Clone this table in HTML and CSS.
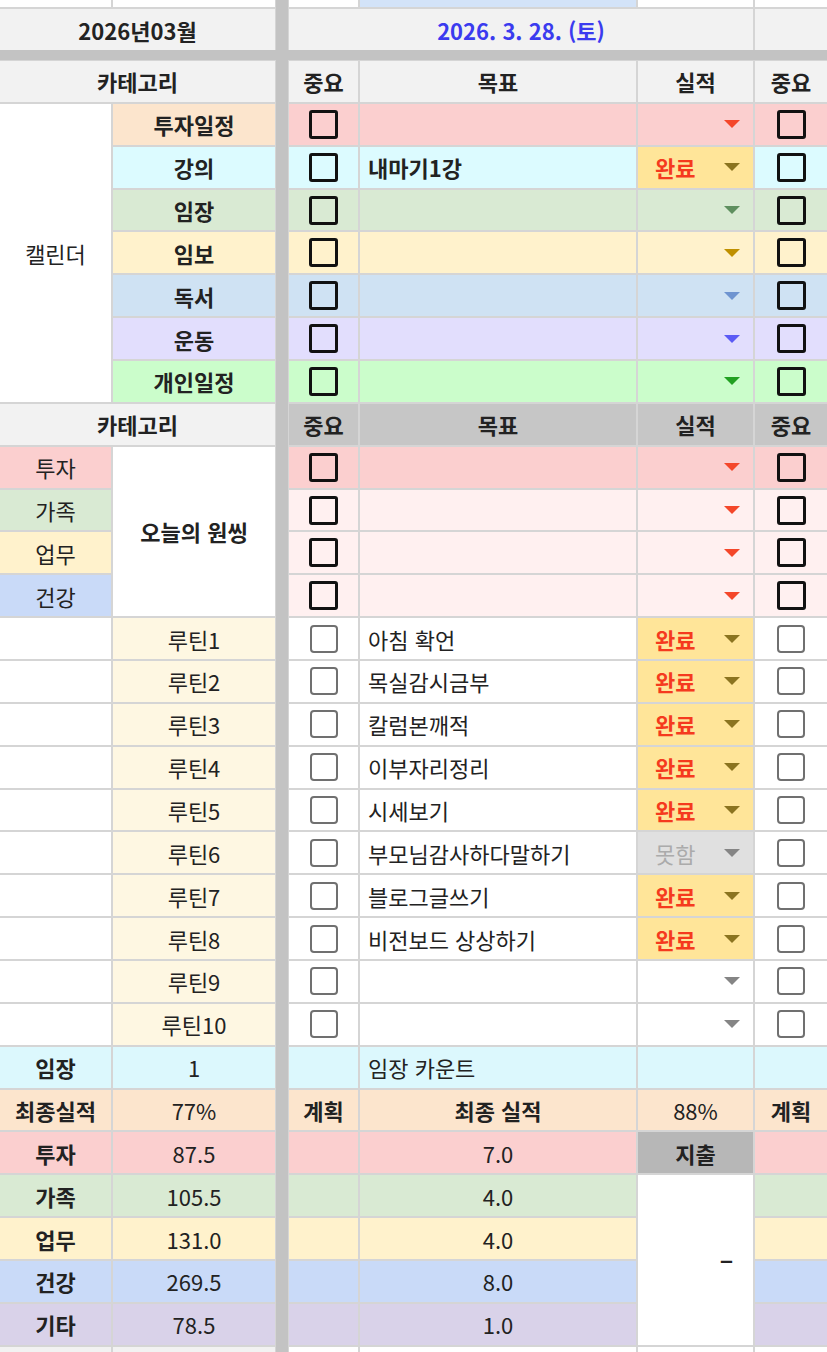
FILE: index.html
```html
<!DOCTYPE html>
<html lang="ko">
<head>
<meta charset="utf-8">
<title>2026년03월</title>
<link rel="stylesheet" href="styles.css">
</head>
<body>
<div class="sheet">
  <div class="divider"></div>
  <div class="hbar"></div>

  <!-- top partial row -->
  <div class="c"></div>
  <div class="c"></div>
  <div class="c"></div>
  <div class="c bg-sel"></div>
  <div class="c"></div>
  <div class="c"></div>

  <!-- date row -->
  <div class="c s2 bg-hdr b">2026년03월</div>
  <div class="c s3 bg-hdr b date">2026. 3. 28. (토)</div>
  <div class="c bg-hdr"></div>

  <!-- header -->
  <div class="c s2 bg-hdr b">카테고리</div>
  <div class="c bg-hdr b">중요</div>
  <div class="c bg-hdr b">목표</div>
  <div class="c bg-hdr b">실적</div>
  <div class="c bg-hdr b">중요</div>

  <!-- calendar section -->
  <div class="c r7">캘린더</div>

  <div class="c bg-peach b">투자일정</div>
  <div class="c bg-pink"><span class="cb"></span></div>
  <div class="c bg-pink t"></div>
  <div class="c bg-pink dd"><span class="arr a-red"></span></div>
  <div class="c bg-pink"><span class="cb"></span></div>

  <div class="c bg-cyan b">강의</div>
  <div class="c bg-cyan"><span class="cb"></span></div>
  <div class="c bg-cyan t b">내마기1강</div>
  <div class="c bg-chip dd"><span class="lbl">완료</span><span class="arr a-olive"></span></div>
  <div class="c bg-cyan"><span class="cb"></span></div>

  <div class="c bg-green b">임장</div>
  <div class="c bg-green"><span class="cb"></span></div>
  <div class="c bg-green t"></div>
  <div class="c bg-green dd"><span class="arr a-green"></span></div>
  <div class="c bg-green"><span class="cb"></span></div>

  <div class="c bg-yellow b">임보</div>
  <div class="c bg-yellow"><span class="cb"></span></div>
  <div class="c bg-yellow t"></div>
  <div class="c bg-yellow dd"><span class="arr a-gold"></span></div>
  <div class="c bg-yellow"><span class="cb"></span></div>

  <div class="c bg-blue b">독서</div>
  <div class="c bg-blue"><span class="cb"></span></div>
  <div class="c bg-blue t"></div>
  <div class="c bg-blue dd"><span class="arr a-blue"></span></div>
  <div class="c bg-blue"><span class="cb"></span></div>

  <div class="c bg-lav b">운동</div>
  <div class="c bg-lav"><span class="cb"></span></div>
  <div class="c bg-lav t"></div>
  <div class="c bg-lav dd"><span class="arr a-violet"></span></div>
  <div class="c bg-lav"><span class="cb"></span></div>

  <div class="c bg-lime b">개인일정</div>
  <div class="c bg-lime"><span class="cb"></span></div>
  <div class="c bg-lime t"></div>
  <div class="c bg-lime dd"><span class="arr a-lime"></span></div>
  <div class="c bg-lime"><span class="cb"></span></div>

  <!-- second header -->
  <div class="c s2 bg-hdr b">카테고리</div>
  <div class="c bg-dark b">중요</div>
  <div class="c bg-dark b">목표</div>
  <div class="c bg-dark b">실적</div>
  <div class="c bg-dark b">중요</div>

  <!-- one thing -->
  <div class="c bg-pink">투자</div>
  <div class="c r4 b">오늘의 원씽</div>
  <div class="c bg-pink"><span class="cb"></span></div>
  <div class="c bg-pink t"></div>
  <div class="c bg-pink dd"><span class="arr a-red"></span></div>
  <div class="c bg-pink"><span class="cb"></span></div>

  <div class="c bg-green">가족</div>
  <div class="c bg-rose"><span class="cb"></span></div>
  <div class="c bg-rose t"></div>
  <div class="c bg-rose dd"><span class="arr a-red"></span></div>
  <div class="c bg-rose"><span class="cb"></span></div>

  <div class="c bg-yellow">업무</div>
  <div class="c bg-rose"><span class="cb"></span></div>
  <div class="c bg-rose t"></div>
  <div class="c bg-rose dd"><span class="arr a-red"></span></div>
  <div class="c bg-rose"><span class="cb"></span></div>

  <div class="c bg-sky2">건강</div>
  <div class="c bg-rose"><span class="cb"></span></div>
  <div class="c bg-rose t"></div>
  <div class="c bg-rose dd"><span class="arr a-red"></span></div>
  <div class="c bg-rose"><span class="cb"></span></div>

  <!-- routines -->
  <div class="c"></div>
  <div class="c bg-cream">루틴1</div>
  <div class="c"><span class="cb lt"></span></div>
  <div class="c t">아침 확언</div>
  <div class="c bg-chip dd"><span class="lbl">완료</span><span class="arr a-olive"></span></div>
  <div class="c"><span class="cb lt"></span></div>

  <div class="c"></div>
  <div class="c bg-cream">루틴2</div>
  <div class="c"><span class="cb lt"></span></div>
  <div class="c t">목실감시금부</div>
  <div class="c bg-chip dd"><span class="lbl">완료</span><span class="arr a-olive"></span></div>
  <div class="c"><span class="cb lt"></span></div>

  <div class="c"></div>
  <div class="c bg-cream">루틴3</div>
  <div class="c"><span class="cb lt"></span></div>
  <div class="c t">칼럼본깨적</div>
  <div class="c bg-chip dd"><span class="lbl">완료</span><span class="arr a-olive"></span></div>
  <div class="c"><span class="cb lt"></span></div>

  <div class="c"></div>
  <div class="c bg-cream">루틴4</div>
  <div class="c"><span class="cb lt"></span></div>
  <div class="c t">이부자리정리</div>
  <div class="c bg-chip dd"><span class="lbl">완료</span><span class="arr a-olive"></span></div>
  <div class="c"><span class="cb lt"></span></div>

  <div class="c"></div>
  <div class="c bg-cream">루틴5</div>
  <div class="c"><span class="cb lt"></span></div>
  <div class="c t">시세보기</div>
  <div class="c bg-chip dd"><span class="lbl">완료</span><span class="arr a-olive"></span></div>
  <div class="c"><span class="cb lt"></span></div>

  <div class="c"></div>
  <div class="c bg-cream">루틴6</div>
  <div class="c"><span class="cb lt"></span></div>
  <div class="c t">부모님감사하다말하기</div>
  <div class="c bg-miss dd"><span class="lbl miss">못함</span><span class="arr a-gray"></span></div>
  <div class="c"><span class="cb lt"></span></div>

  <div class="c"></div>
  <div class="c bg-cream">루틴7</div>
  <div class="c"><span class="cb lt"></span></div>
  <div class="c t">블로그글쓰기</div>
  <div class="c bg-chip dd"><span class="lbl">완료</span><span class="arr a-olive"></span></div>
  <div class="c"><span class="cb lt"></span></div>

  <div class="c"></div>
  <div class="c bg-cream">루틴8</div>
  <div class="c"><span class="cb lt"></span></div>
  <div class="c t">비전보드 상상하기</div>
  <div class="c bg-chip dd"><span class="lbl">완료</span><span class="arr a-olive"></span></div>
  <div class="c"><span class="cb lt"></span></div>

  <div class="c"></div>
  <div class="c bg-cream">루틴9</div>
  <div class="c"><span class="cb lt"></span></div>
  <div class="c t"></div>
  <div class="c dd"><span class="arr a-gray"></span></div>
  <div class="c"><span class="cb lt"></span></div>

  <div class="c"></div>
  <div class="c bg-cream">루틴10</div>
  <div class="c"><span class="cb lt"></span></div>
  <div class="c t"></div>
  <div class="c dd"><span class="arr a-gray"></span></div>
  <div class="c"><span class="cb lt"></span></div>

  <!-- 임장 count -->
  <div class="c bg-aqua b">임장</div>
  <div class="c bg-aqua">1</div>
  <div class="c bg-aqua"></div>
  <div class="c bg-aqua t">임장 카운트</div>
  <div class="c bg-aqua"></div>
  <div class="c bg-aqua"></div>

  <!-- 최종실적 -->
  <div class="c bg-peach b">최종실적</div>
  <div class="c bg-peach">77%</div>
  <div class="c bg-peach b">계획</div>
  <div class="c bg-peach b">최종 실적</div>
  <div class="c bg-peach">88%</div>
  <div class="c bg-peach b">계획</div>

  <div class="c bg-pink b">투자</div>
  <div class="c bg-pink">87.5</div>
  <div class="c bg-pink"></div>
  <div class="c bg-pink">7.0</div>
  <div class="c bg-exp b">지출</div>
  <div class="c bg-pink"></div>

  <div class="c bg-green b">가족</div>
  <div class="c bg-green">105.5</div>
  <div class="c bg-green"></div>
  <div class="c bg-green">4.0</div>
  <div class="c r4 dash">−</div>
  <div class="c bg-green"></div>

  <div class="c bg-yellow b">업무</div>
  <div class="c bg-yellow">131.0</div>
  <div class="c bg-yellow"></div>
  <div class="c bg-yellow">4.0</div>
  <div class="c bg-yellow"></div>

  <div class="c bg-sky2 b">건강</div>
  <div class="c bg-sky2">269.5</div>
  <div class="c bg-sky2"></div>
  <div class="c bg-sky2">8.0</div>
  <div class="c bg-sky2"></div>

  <div class="c bg-purple b">기타</div>
  <div class="c bg-purple">78.5</div>
  <div class="c bg-purple"></div>
  <div class="c bg-purple">1.0</div>
  <div class="c bg-purple"></div>

  <!-- bottom partial row -->
  <div class="c bg-hdr"></div>
  <div class="c bg-hdr"></div>
  <div class="c"></div>
  <div class="c"></div>
  <div class="c"></div>
  <div class="c"></div>
</div>
</body>
</html>
```

FILE: styles.css
```css
html, body {
  margin: 0;
  padding: 0;
  background: #ffffff;
}

body {
  width: 827px;
  height: 1352px;
  overflow: hidden;
  font-family: "Noto Sans CJK KR", "Noto Sans", sans-serif;
  color: #222222;
}

.sheet {
  display: grid;
  grid-template-columns: 111px 162px 10px 69px 276px 115px 72px;
  grid-template-rows: 7px 41px 7px repeat(30, 40.86px) 5px;
  gap: 2px;
  background: #d5d5d5;
  width: 827px;
}

.c {
  display: flex;
  align-items: center;
  justify-content: center;
  font-size: 22px;
  line-height: 1;
  background: #ffffff;
  min-width: 0;
  overflow: hidden;
  white-space: nowrap;
}

.divider {
  grid-column: 3;
  grid-row: 1 / -1;
  background: #c3c3c3;
  margin: 0 -1px;
}

.hbar {
  grid-column: 1 / -1;
  grid-row: 3;
  background: #c3c3c3;
  margin: -2px 0 -1px;
}

.s2 { grid-column: span 2; }
.s3 { grid-column: span 3; }
.r4 { grid-row: span 4; }
.r7 { grid-row: span 7; }

.b { font-weight: 700; }

.t {
  justify-content: flex-start;
  padding-left: 8px;
}

.date { color: #3b3bef; }

/* backgrounds */
.bg-hdr { background: #f2f2f2; }
.bg-dark { background: #c6c6c6; }
.bg-sel { background: #d3e3f8; }
.bg-peach { background: #fce5cd; }
.bg-pink { background: #fbcfcf; }
.bg-rose { background: #fff0f0; }
.bg-cyan { background: #dcfbff; }
.bg-green { background: #d9ead3; }
.bg-yellow { background: #fff2cc; }
.bg-blue { background: #cfe2f3; }
.bg-lav { background: #e2defd; }
.bg-lime { background: #cbfdcb; }
.bg-sky2 { background: #c9daf8; }
.bg-purple { background: #d9d2e9; }
.bg-cream { background: #fef7e2; }
.bg-aqua { background: #dcf8fd; }
.bg-chip { background: #ffe599; }
.bg-miss { background: #e0e0e0; }
.bg-exp { background: #b7b7b7; }

/* checkboxes */
.cb {
  display: block;
  width: 23px;
  height: 23px;
  border: 3px solid #111111;
  border-radius: 3px;
}

.cb.lt {
  width: 24px;
  height: 24px;
  border: 2px solid #707070;
  border-radius: 4px;
}

/* dropdowns */
.dd {
  justify-content: flex-start;
  padding: 0 13px 0 17px;
}

.lbl {
  font-weight: 700;
  color: #f53a1e;
}

.lbl.miss {
  font-weight: 400;
  color: #ababab;
}

.arr {
  margin-left: auto;
  width: 0;
  height: 0;
  border-left: 8px solid transparent;
  border-right: 8px solid transparent;
  border-top: 8px solid #888888;
}

.a-red { border-top-color: #f4472a; }
.a-olive { border-top-color: #8b7420; }
.a-green { border-top-color: #5f8f5f; }
.a-gold { border-top-color: #bf9000; }
.a-blue { border-top-color: #6f94d0; }
.a-violet { border-top-color: #5b5bf5; }
.a-lime { border-top-color: #22a022; }
.a-gray { border-top-color: #858585; }

.dash {
  justify-content: flex-end;
  padding-right: 20px;
  font-weight: 700;
}
```
